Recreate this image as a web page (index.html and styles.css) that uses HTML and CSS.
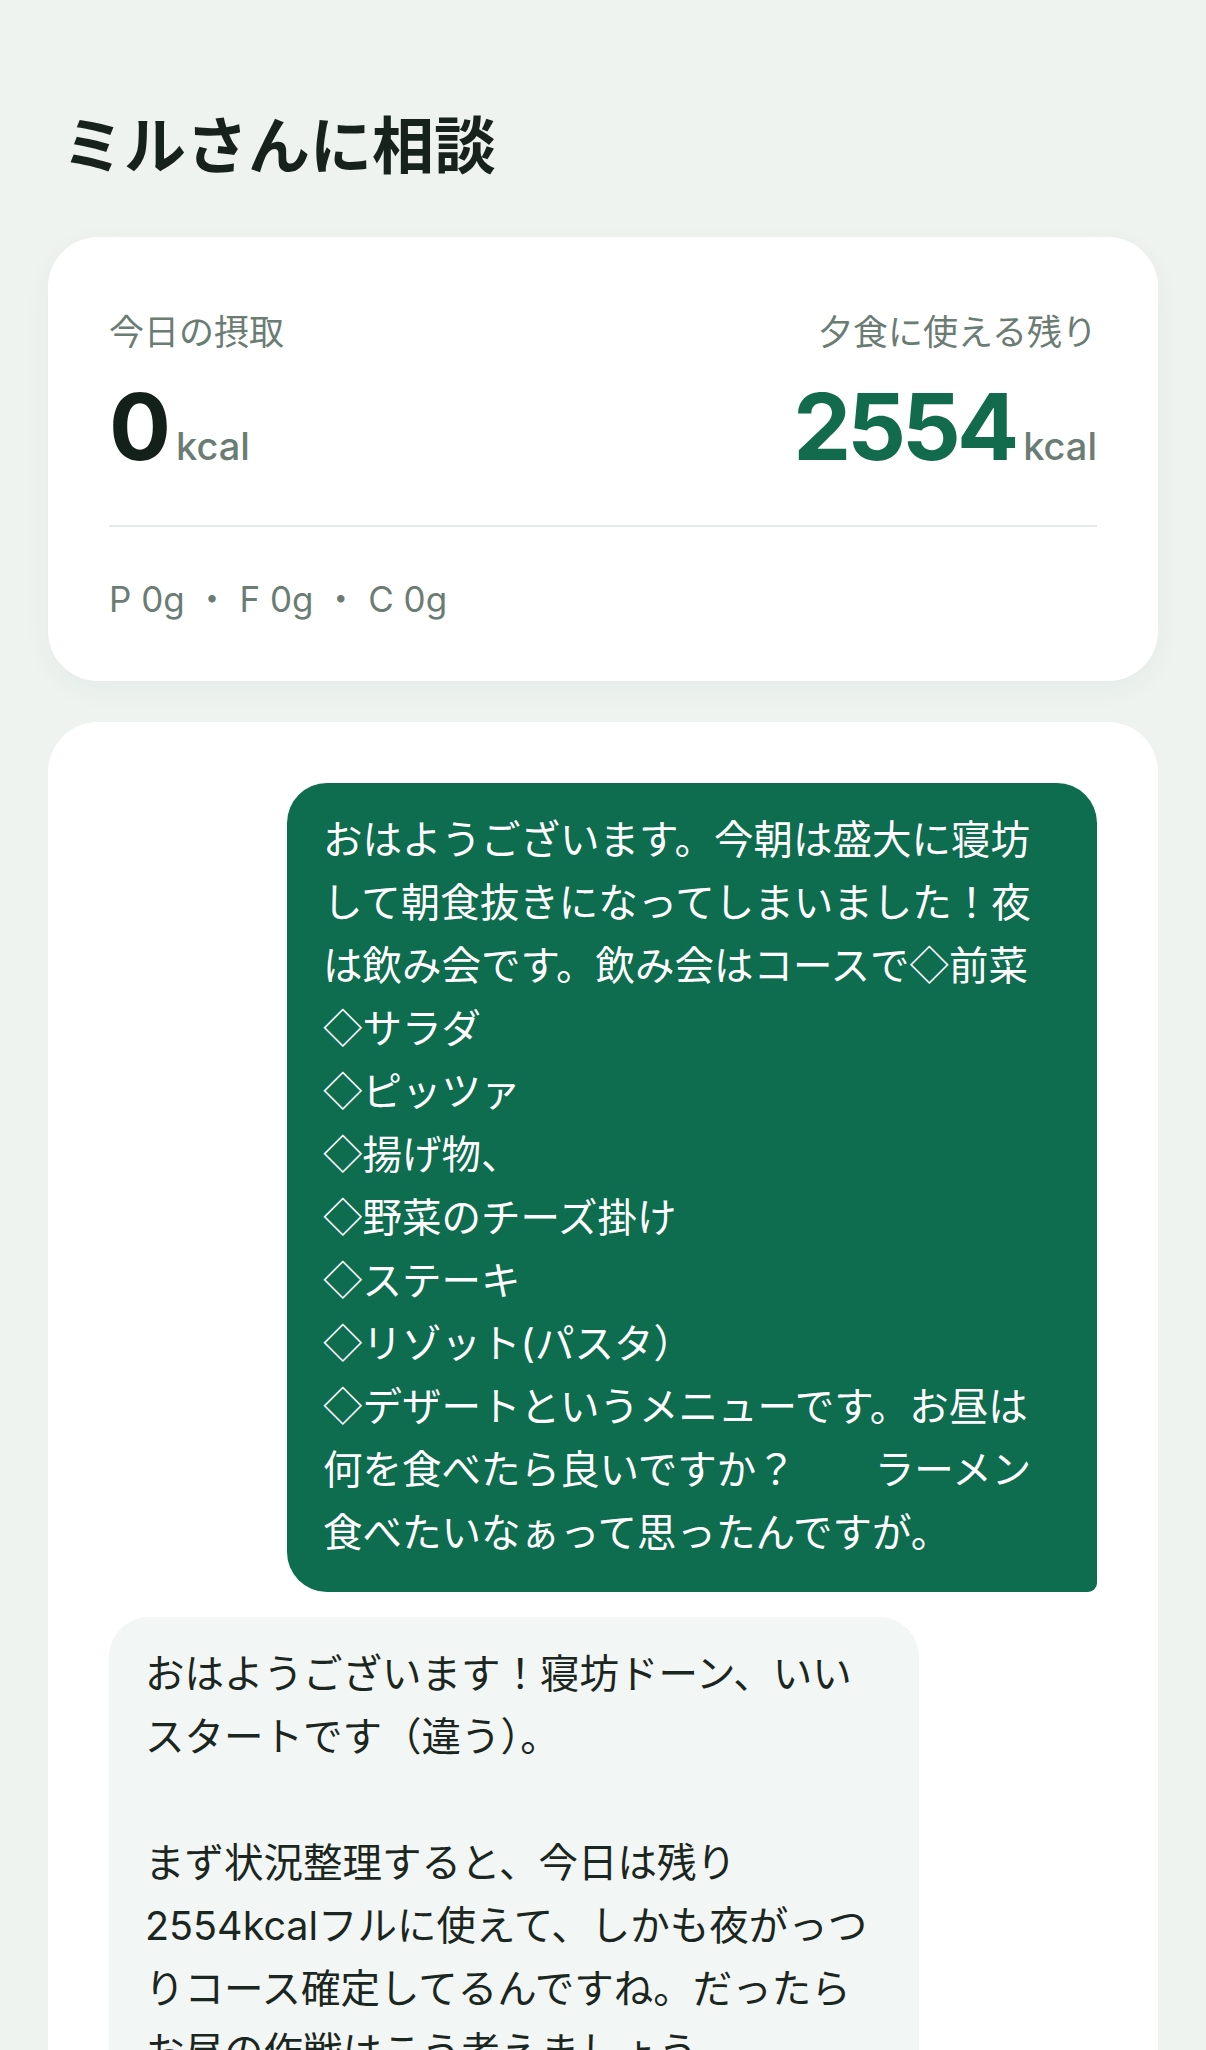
FILE: index.html
```html
<!DOCTYPE html>
<html lang="ja">
<head>
<meta charset="utf-8">
<title>ミルさんに相談</title>
<link rel="stylesheet" href="styles.css">
</head>
<body>
<main class="page">
  <h1 class="title">ミルさんに相談</h1>

  <section class="summary">
    <div class="summary-row">
      <div class="stat">
        <div class="label">今日の摂取</div>
        <div class="value"><span class="num">0</span><span class="unit">kcal</span></div>
      </div>
      <div class="stat stat-right">
        <div class="label">夕食に使える残り</div>
        <div class="value"><span class="num num-green">2554</span><span class="unit">kcal</span></div>
      </div>
    </div>
    <div class="divider"></div>
    <div class="macros">P 0g ・ F 0g ・ C 0g</div>
  </section>

  <section class="chat">
    <div class="bubble bubble-user">おはようございます。今朝は盛大に寝坊して朝食抜きになってしまいました！夜は飲み会です。飲み会はコースで<span class="dia">◇</span>前菜
<span class="dia">◇</span>サラダ
<span class="dia">◇</span>ピッツァ
<span class="dia">◇</span>揚げ物、
<span class="dia">◇</span>野菜のチーズ掛け
<span class="dia">◇</span>ステーキ
<span class="dia">◇</span>リゾット(パスタ）
<span class="dia">◇</span>デザートというメニューです。お昼は何を食べたら良いですか？　　ラーメン食べたいなぁって思ったんですが。</div>
    <div class="bubble bubble-bot">おはようございます！寝坊ドーン、いいスタートです（違う）。

まず状況整理すると、今日は残り2554kcalフルに使えて、しかも夜がっつりコース確定してるんですね。だったらお昼の作戦はこう考えましょう。</div>
  </section>
</main>
</body>
</html>
```

FILE: styles.css
```css
html, body {
  margin: 0;
  padding: 0;
}

body {
  background: #eef3f0;
  font-family: Inter, "Noto Sans CJK JP", sans-serif;
  color: #18231e;
}

.page {
  padding: 0 48px;
}

.title {
  margin: 0;
  padding: 100px 0 0 14px;
  font-family: "Noto Sans CJK JP", sans-serif;
  font-size: 62px;
  line-height: 84px;
  font-weight: 700;
  color: #17221d;
}

.summary {
  margin-top: 53px;
  background: #ffffff;
  border-radius: 50px;
  padding: 68px 61px 57px;
  box-shadow: 0 8px 28px rgba(20, 60, 40, 0.045);
}

.summary-row {
  display: flex;
  justify-content: space-between;
}

.stat {
  display: flex;
  flex-direction: column;
  align-items: flex-start;
}

.stat-right {
  align-items: flex-end;
}

.label {
  font-family: "Noto Sans CJK JP", sans-serif;
  font-size: 35px;
  line-height: 49px;
  color: #6b7c74;
}

.value {
  display: flex;
  align-items: baseline;
  gap: 8px;
  margin-top: 27px;
}

.num {
  font-size: 92px;
  line-height: 92px;
  font-weight: 700;
  letter-spacing: -3px;
  color: #14201a;
}

.num-green {
  color: #126b4c;
  letter-spacing: -4px;
}

.unit {
  font-size: 38px;
  font-weight: 500;
  color: #6b7c74;
}

.divider {
  height: 2px;
  background: #e6eae8;
  margin-top: 52px;
}

.macros {
  margin-top: 48px;
  font-size: 35px;
  line-height: 49px;
  color: #6b7c74;
}

.chat {
  margin-top: 41px;
  background: #ffffff;
  border-radius: 50px;
  padding: 61px;
  display: flex;
  flex-direction: column;
  gap: 25px;
}

.bubble {
  box-sizing: border-box;
  max-width: 810px;
  padding: 26px 36px 27px;
  font-size: 39.5px;
  line-height: 63px;
  white-space: pre-wrap;
  border-radius: 40px;
}

.bubble-user {
  align-self: flex-end;
  background: #0e6c4f;
  color: #ffffff;
  border-bottom-right-radius: 9px;
}

.bubble-bot {
  align-self: flex-start;
  background: #f2f6f4;
  color: #1b2621;
}

.dia {
  font-family: "Noto Sans CJK JP", sans-serif;
  line-height: 0;
}
```
